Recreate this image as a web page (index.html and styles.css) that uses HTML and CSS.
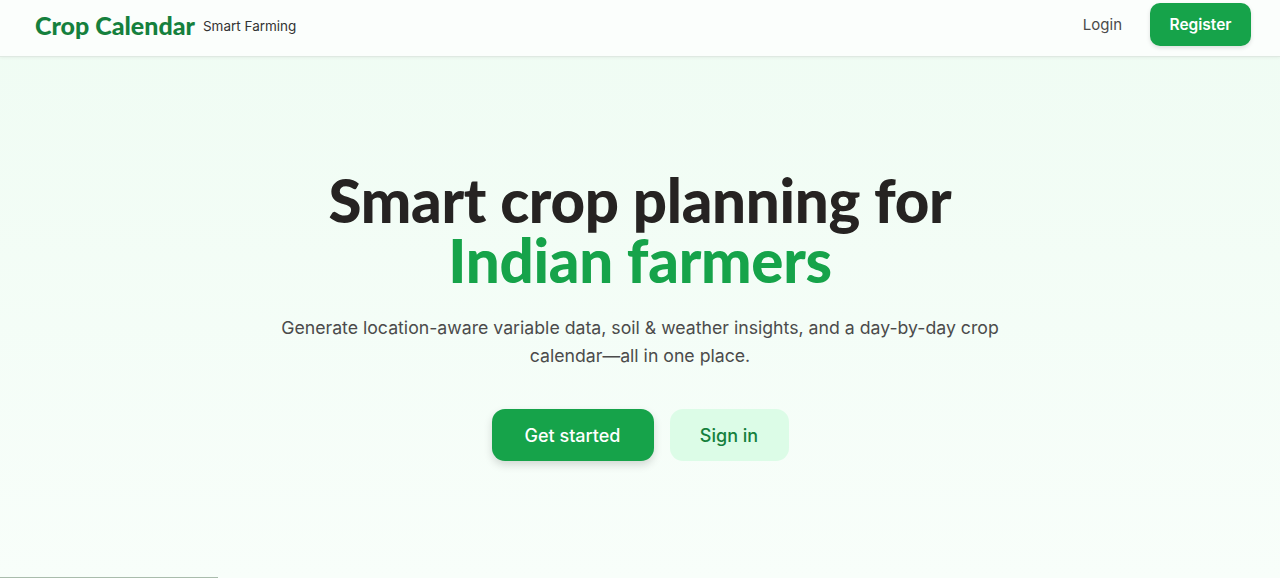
FILE: index.html
```html
<!DOCTYPE html>
<html lang="en">
<head>
    <meta charset="UTF-8">
    <meta name="viewport" content="width=device-width, initial-scale=1.0">
    <title>Crop Calendar - Smart Farming</title>
    <link rel="stylesheet" href="styles.css">
</head>
<body>
    <header class="topbar">
        <div class="topbar-inner">
            <a href="#" class="brand">
                <span class="brand-name">Crop Calendar</span>
                <span class="brand-tag">Smart Farming</span>
            </a>
            <nav class="nav">
                <a href="#" class="nav-link">Login</a>
                <a href="#" class="btn btn-register">Register</a>
            </nav>
        </div>
    </header>

    <main class="hero">
        <h1 class="hero-title">
            <span class="title-line">Smart crop planning for</span>
            <span class="title-line accent">Indian farmers</span>
        </h1>
        <p class="hero-text">
            Generate location-aware variable data, soil &amp; weather insights, and a day-by-day crop calendar—all in one place.
        </p>
        <div class="hero-actions">
            <a href="#" class="btn btn-primary">Get started</a>
            <a href="#" class="btn btn-soft">Sign in</a>
        </div>
    </main>

    <div class="progress"></div>
</body>
</html>
```

FILE: styles.css
```css
* {
    box-sizing: border-box;
}
body {
    margin: 0;
    font-family: "Inter", "Noto Sans", sans-serif;
    background: linear-gradient(180deg, #effcf3 0%, #f8fefa 100%);
    min-height: 100vh;
    color: #262626;
}
a {
    text-decoration: none;
}
.topbar {
    height: 57px;
    background-color: #fbfefc;
    border-bottom: 1px solid #dfe9e2;
    box-shadow: 0 1px 3px rgba(0,0,0,0.05);
}
.topbar-inner {
    height: 49px;
    padding: 0 29px 0 35px;
    display: flex;
    align-items: center;
    justify-content: space-between;
}
.brand {
    display: flex;
    align-items: center;
    gap: 8px;
}
.brand-name {
    font-family: "Lato", sans-serif;
    font-weight: 900;
    font-size: 25px;
    color: #15803d;
}
.brand-tag {
    font-size: 13.5px;
    color: #333;
    padding-top: 2px;
}
.nav {
    display: flex;
    align-items: center;
    gap: 28px;
}
.nav-link {
    color: #4a4a4a;
    font-size: 15px;
}
.btn {
    display: inline-flex;
    align-items: center;
    justify-content: center;
    font-weight: 500;
}
.btn-register {
    width: 101px;
    height: 43px;
    background-color: #16a34a;
    color: white;
    border-radius: 10px;
    font-size: 15.5px;
    font-weight: 600;
    box-shadow: 0 2px 4px rgba(0,0,0,0.12);
}
.hero {
    text-align: center;
    padding-top: 113px;
}
.hero-title {
    margin: 0;
    font-family: "Lato", sans-serif;
    font-weight: 900;
    font-size: 60px;
    letter-spacing: -0.3px;
    color: #262322;
}
.title-line {
    display: block;
    height: 60px;
    line-height: 60px;
}
.accent {
    color: #16a34a;
}
.hero-text {
    max-width: 760px;
    margin: 24px auto 0;
    font-size: 17.7px;
    line-height: 28px;
    color: #4b4b4b;
}
.hero-actions {
    margin-top: 39px;
    display: flex;
    justify-content: center;
    gap: 16px;
}
.btn-primary {
    width: 162px;
    height: 52px;
    background-color: #16a34a;
    color: white;
    border-radius: 13px;
    font-size: 18px;
    box-shadow: 0 4px 8px rgba(0,0,0,0.15);
}
.btn-soft {
    width: 119px;
    height: 52px;
    background-color: #dcfce7;
    color: #15803d;
    border-radius: 13px;
    font-size: 18px;
}
.progress {
    position: fixed;
    left: 0;
    bottom: 0;
    width: 218px;
    height: 1px;
    background-color: #a9bcac;
}
```
